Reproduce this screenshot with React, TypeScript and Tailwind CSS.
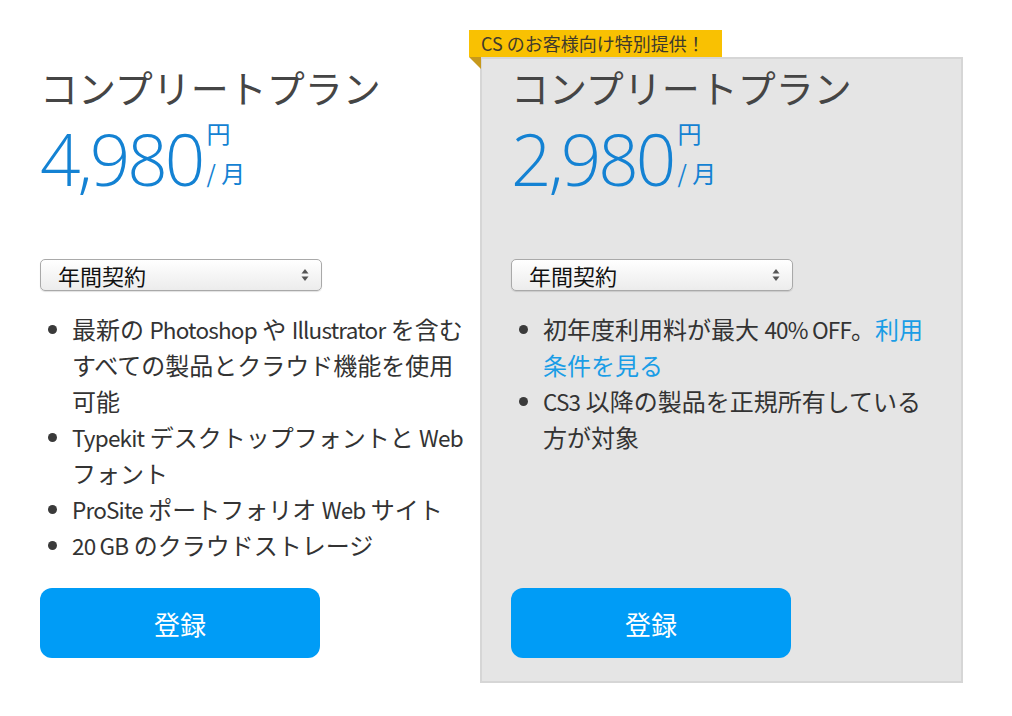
import React from "react";

const FONT = '"Noto Sans CJK JP", "Noto Sans", sans-serif';

function Select() {
  return (
    <div className="flex h-[32px] w-[282px] items-center justify-between rounded-[5px] border border-[#a9a9a9] bg-gradient-to-b from-white to-[#ececec] pl-[17px] pr-[12px] shadow-[0_1px_1px_rgba(0,0,0,0.12)]">
      <span className="text-[22px] leading-[32px] text-[#111]">年間契約</span>
      <svg width="8" height="14" viewBox="0 0 8 14">
        <polygon points="4,1 7.5,5.5 0.5,5.5" fill="#555" />
        <polygon points="4,13 7.5,8.5 0.5,8.5" fill="#555" />
      </svg>
    </div>
  );
}

function L({ children }: { children: React.ReactNode }) {
  return <span className="text-[22.5px] tracking-[-0.8px]">{children}</span>;
}

function Bullet({ children }: { children: React.ReactNode }) {
  return (
    <li className="flex">
      <div className="w-[32px] shrink-0 pl-[8px] pt-[14px]">
        <div className="h-[9px] w-[9px] rounded-full bg-[#3a3a3a]" />
      </div>
      <div className="min-w-0 flex-1 whitespace-nowrap">{children}</div>
    </li>
  );
}

function PlanBody({ price, items }: { price: string; items: React.ReactNode[] }) {
  return (
    <>
      <div className="h-[46px] text-[38px] leading-[46px] text-[#454545]">コンプリートプラン</div>
      <div className="mt-[7px] flex h-[76px] items-start text-[#1482d3]">
        <span
          className="mt-[4px] text-[71px] font-light leading-[76px] tracking-[-3px]"
          style={{ fontFamily: '"Open Sans", "Noto Sans CJK JP", sans-serif' }}
        >
          {price}
        </span>
        <div className="ml-[4px] flex flex-col">
          <span className="mt-[4px] text-[24px] leading-[24px]">円</span>
          <span className="mt-[16px] text-[24px] leading-[24px]">/ 月</span>
        </div>
      </div>
      <div className="mt-[66px]">
        <Select />
      </div>
      <ul className="mt-[20px] text-[24px] leading-[36px] text-[#333]">
        {items.map((it, i) => (
          <Bullet key={i}>{it}</Bullet>
        ))}
      </ul>
      <button className="mt-auto flex h-[70px] w-[280px] items-center justify-center rounded-[12px] bg-[#009cf6] text-[26px] text-white">
        登録
      </button>
    </>
  );
}

export default function App() {
  return (
    <div className="min-h-[716px] w-[1012px] bg-white" style={{ fontFamily: FONT }}>
      <div className="flex items-start pl-[38px] pt-[57px]">
        <div className="flex h-[626px] w-[424px] flex-col border-2 border-transparent pb-[23px] pt-[5px]">
          <PlanBody
            price="4,980"
            items={[
              <>
                最新の <L>Photoshop</L> や <L>Illustrator</L> を含む
                <br />
                すべての製品とクラウド機能を使用
                <br />
                可能
              </>,
              <>
                <L>Typekit</L> デスクトップフォントと <L>Web</L>
                <br />
                フォント
              </>,
              <>
                <L>ProSite</L> ポートフォリオ <L>Web</L> サイト
              </>,
              <>
                <L>20 GB</L> のクラウドストレージ
              </>,
            ]}
          />
        </div>
        <div className="relative ml-[18px] flex h-[626px] w-[483px] flex-col border-2 border-[#d6d6d6] bg-[#e5e5e5] px-[29px] pb-[23px] pt-[5px]">
          <div className="absolute left-[-13px] top-[-29px] flex h-[27px] w-[253px] items-center bg-[#f9c102] pl-[12px] text-[18px] leading-[27px] text-[#3f3a2c]">
            CS のお客様向け特別提供！
          </div>
          <svg className="absolute left-[-13px] top-[-2px]" width="12" height="12" viewBox="0 0 12 12">
            <polygon points="0,0 12,0 12,12" fill="#c7991c" />
          </svg>
          <PlanBody
            price="2,980"
            items={[
              <>
                初年度利用料が最大 <L>40% OFF</L>。<span className="text-[#1a9de6]">利用</span>
                <br />
                <span className="text-[#1a9de6]">条件を見る</span>
              </>,
              <>
                <L>CS3</L> 以降の製品を正規所有している
                <br />
                方が対象
              </>,
            ]}
          />
        </div>
      </div>
    </div>
  );
}
